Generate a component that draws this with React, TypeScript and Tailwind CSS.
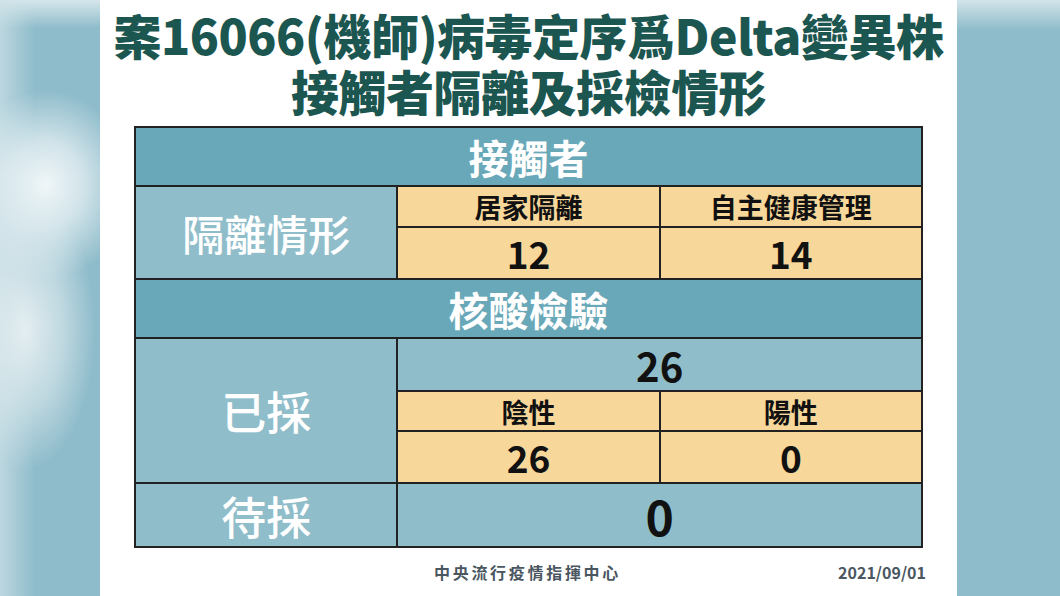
const FONT = "font-['Noto_Sans_CJK_TC','Noto_Sans_CJK_SC',sans-serif]"

// label cells: white text on light teal
function LabelCell({ children, rowSpan, className = '' }: { children: string; rowSpan?: number; className?: string }) {
  return (
    <td
      rowSpan={rowSpan}
      className={`border-2 border-[#222] bg-[#8fbdca] text-center font-medium text-white ${className}`}
    >
      {children}
    </td>
  )
}

function SectionRow({ label, h }: { label: string; h: string }) {
  return (
    <tr className={h}>
      <td colSpan={3} className="border-2 border-[#222] bg-[#69a8b8] text-center text-[40px] font-bold leading-none text-white">
        {label}
      </td>
    </tr>
  )
}

function Cell({ children, className = '' }: { children: string; className?: string }) {
  return (
    <td className={`border-2 border-[#222] bg-[#f8d89a] text-center font-bold leading-none text-[#111] ${className}`}>
      {children}
    </td>
  )
}

export default function App() {
  return (
    <div className={`flex h-[596px] w-[1060px] overflow-hidden ${FONT}`}>
      {/* blurred left strip */}
      <div className="h-full w-[100px] shrink-0 bg-[#8fbccb] bg-[radial-gradient(ellipse_85px_95px_at_45px_185px,rgba(240,246,248,1)_0%,rgba(232,241,244,0.75)_45%,rgba(143,188,203,0)_100%),radial-gradient(ellipse_70px_140px_at_25px_330px,rgba(228,238,241,1)_0%,rgba(222,234,238,0.6)_55%,rgba(143,188,203,0)_100%),linear-gradient(90deg,rgba(206,226,232,0.7)_0px,rgba(143,188,203,0)_35px),linear-gradient(180deg,#d6e6eb_0px,#8fbccb_28px,#8fbccb_100%)]" />

      <div className="flex w-[857px] shrink-0 flex-col bg-white">
        <h1 className="pt-[6px] text-center text-[48px] font-black leading-[56px] tracking-[-0.5px] text-[#1c5650]">
          <div>案16066(機師)病毒定序爲Delta變異株</div>
          <div>接觸者隔離及採檢情形</div>
        </h1>

        <div className="mt-[8px] px-[34px]">
          <table className="w-[789px] table-fixed border-collapse border-2 border-[#222]">
            <tbody>
              <SectionRow label="接觸者" h="h-[59px]" />
              <tr className="h-[41px]">
                <LabelCell rowSpan={2} className="text-[42px] leading-none">隔離情形</LabelCell>
                <Cell className="text-[27px]">居家隔離</Cell>
                <Cell className="text-[27px]">自主健康管理</Cell>
              </tr>
              <tr className="h-[52px]">
                <Cell className="text-[37px]">12</Cell>
                <Cell className="text-[37px]">14</Cell>
              </tr>
              <SectionRow label="核酸檢驗" h="h-[59px]" />
              <tr className="h-[53px]">
                <LabelCell rowSpan={3} className="text-[45px] leading-none">已採</LabelCell>
                <td colSpan={2} className="border-2 border-[#222] bg-[#8fbdca] text-center text-[40px] font-bold leading-none text-[#111]">
                  26
                </td>
              </tr>
              <tr className="h-[40px]">
                <Cell className="text-[27px]">陰性</Cell>
                <Cell className="text-[27px]">陽性</Cell>
              </tr>
              <tr className="h-[52px]">
                <Cell className="text-[37px]">26</Cell>
                <Cell className="text-[37px]">0</Cell>
              </tr>
              <tr className="h-[64px]">
                <LabelCell className="text-[45px] leading-none">待採</LabelCell>
                <td colSpan={2} className="border-2 border-[#222] bg-[#8fbdca] text-center text-[48px] font-bold leading-none text-[#111]">
                  0
                </td>
              </tr>
            </tbody>
          </table>
        </div>

        <div className="mt-[12px] flex items-center pl-[334px] pr-[31px] text-[16px] font-bold text-[#4a5660]">
          <span className="tracking-[2.7px]">中央流行疫情指揮中心</span>
          <span className="ml-auto">2021/09/01</span>
        </div>
      </div>

      {/* right strip */}
      <div className="h-full flex-1 bg-[linear-gradient(180deg,#d3e4e9_0px,#8fbccb_30px,#8fbccb_100%)]" />
    </div>
  )
}
